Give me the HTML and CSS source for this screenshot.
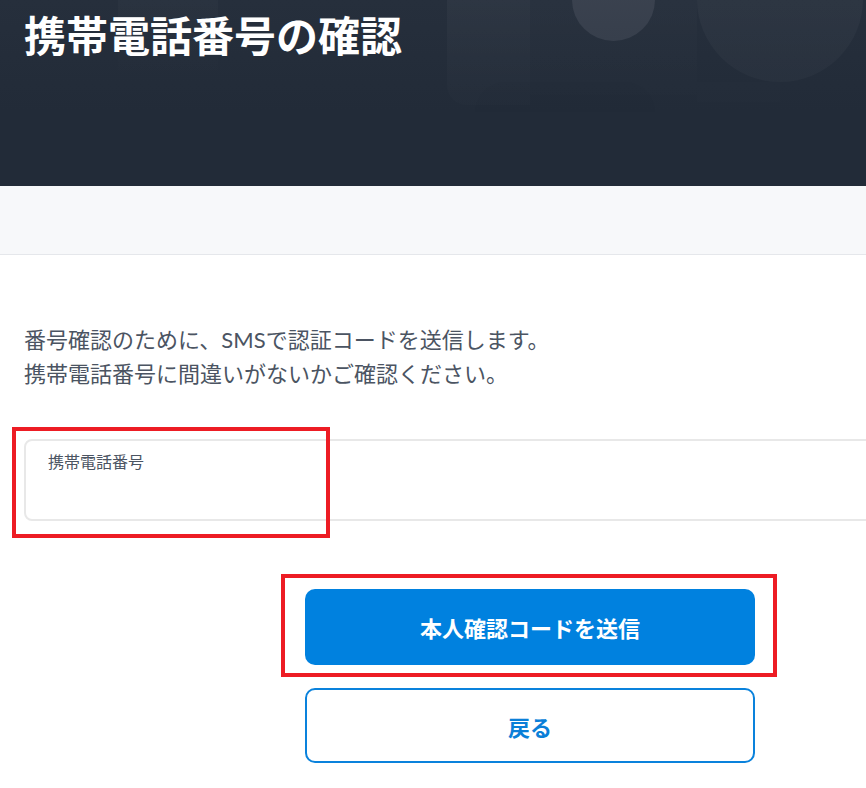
FILE: index.html
```html
<!DOCTYPE html>
<html lang="ja">
<head>
<meta charset="utf-8">
<title>携帯電話番号の確認</title>
<link rel="stylesheet" href="styles.css">
</head>
<body>
<div class="page">
  <header class="hero">
    <div class="deco">
      <span class="d d1"></span>
      <span class="d d2"></span>
      <span class="d d3"></span>
      <span class="d d4"></span>
      <span class="d d5"></span>
      <span class="d d6"></span>
      <span class="d d7"></span>
    </div>
    <h1 class="hero-title">携帯電話番号の確認</h1>
  </header>
  <div class="band"></div>
  <main class="main">
    <p class="lead">番号確認のために、SMSで認証コードを送信します。<br>携帯電話番号に間違いがないかご確認ください。</p>
    <div class="field">
      <label class="field-label" for="tel">携帯電話番号</label>
      <input class="field-input" id="tel" type="tel">
    </div>
    <div class="actions">
      <button class="btn btn-primary" type="button">本人確認コードを送信</button>
      <button class="btn btn-outline" type="button">戻る</button>
    </div>
    <span class="mark mark-field"></span>
    <span class="mark mark-btn"></span>
  </main>
</div>
</body>
</html>
```

FILE: styles.css
```css
html, body {
  margin: 0;
  padding: 0;
  background: #ffffff;
  overflow: hidden;
}
.page {
  width: 1060px;
  font-family: Lato, "Noto Sans CJK JP", sans-serif;
  color: #4b5462;
}
.hero {
  position: relative;
  height: 186px;
  background: linear-gradient(180deg, #262f3c 0%, #222b38 60%, #222b38 100%);
  padding: 0 24px;
  box-sizing: border-box;
  overflow: hidden;
}
.deco {
  position: absolute;
  inset: 0;
}
.d {
  position: absolute;
  display: block;
}
.d1 { left: 118px; top: 0; width: 100px; height: 80px; background: linear-gradient(180deg, rgba(255,255,255,0.02), rgba(255,255,255,0)); }
.d2 { left: 447px; top: 0; width: 83px; height: 105px; background: linear-gradient(180deg, rgba(255,255,255,0.035), rgba(255,255,255,0.008)); border-bottom-left-radius: 20px; }
.d3 { left: 530px; top: 0; width: 167px; height: 95px; background: linear-gradient(180deg, rgba(255,255,255,0.015), rgba(255,255,255,0.005)); }
.d4 { left: 572px; top: -42px; width: 83px; height: 83px; border-radius: 50%; background: linear-gradient(180deg, #3d4451, #373f4c); }
.d5 { left: 697px; top: -84px; width: 166px; height: 166px; border-radius: 50%; background: linear-gradient(180deg, rgba(255,255,255,0.045), rgba(255,255,255,0.025)); }
.d6 { left: 697px; top: 82px; width: 83px; height: 20px; background: rgba(255,255,255,0.008); }
.d7 { left: 475px; top: 82px; width: 180px; height: 30px; border-radius: 90px 90px 0 0; background: rgba(0,0,0,0.015); }
.hero-title {
  position: relative;
  margin: 0;
  padding-top: 6px;
  font-size: 42px;
  line-height: 56px;
  font-weight: 700;
  color: #ffffff;
  font-family: "Noto Sans CJK JP", sans-serif;
}
.band {
  height: 68px;
  background: #f7f8fa;
  border-bottom: 1px solid #e5e7eb;
}
.main {
  position: relative;
  padding: 68px 24px 40px;
}
.lead {
  margin: 0;
  font-size: 22px;
  line-height: 34px;
  color: #4b5462;
}
.field {
  margin-top: 48px;
  height: 82px;
  box-sizing: border-box;
  border: 2px solid #e8e8e8;
  border-radius: 8px;
  padding: 9px 22px 0;
  display: flex;
  flex-direction: column;
}
.field-label {
  font-size: 16px;
  line-height: 22px;
  color: #4b5462;
  font-family: "Noto Sans CJK JP", sans-serif;
}
.field-input {
  border: none;
  outline: none;
  background: transparent;
  padding: 0;
  height: 34px;
  font-size: 18px;
  font-family: Lato, "Noto Sans CJK JP", sans-serif;
}
.actions {
  margin-top: 68px;
  display: flex;
  flex-direction: column;
  align-items: center;
  gap: 23px;
}
.btn {
  width: 450px;
  height: 76px;
  box-sizing: border-box;
  border-radius: 10px;
  font-family: "Noto Sans CJK JP", sans-serif;
  font-size: 22px;
  font-weight: 700;
  cursor: pointer;
}
.btn-primary {
  background: #0081df;
  border: none;
  color: #ffffff;
}
.btn-outline {
  height: 75px;
  background: #ffffff;
  border: 2px solid #0a82dc;
  color: #0a7fd8;
}
.mark {
  position: absolute;
  border: 4px solid #ed1c24;
  box-sizing: border-box;
  pointer-events: none;
}
.mark-field {
  left: 12px;
  top: 172px;
  width: 318px;
  height: 111px;
}
.mark-btn {
  left: 281px;
  top: 319px;
  width: 496px;
  height: 103px;
}
```
